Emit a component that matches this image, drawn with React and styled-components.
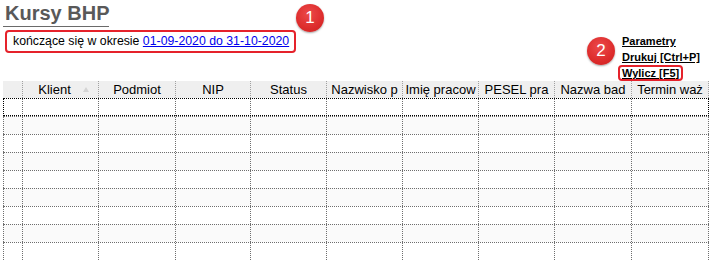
import React from "react";
import styled, { createGlobalStyle } from "styled-components";

const Global = createGlobalStyle`
  html, body { margin: 0; padding: 0; background: #fff; }
  body { font-family: "Liberation Sans", Arial, sans-serif; color: #000; overflow: hidden; }
`;

const Page = styled.div`
  position: relative;
  width: 714px;
  height: 260px;
  overflow: hidden;
`;

const Top = styled.div`
  display: flex;
  justify-content: space-between;
  height: 81px;
  padding-left: 3px;
`;

const Left = styled.div`
  display: flex;
  flex-direction: column;
  align-items: flex-start;
`;

const Title = styled.h1`
  margin: 1px 0 0 0;
  padding: 0 0 1px 2px;
  font-size: 20px;
  line-height: 24px;
  font-weight: bold;
  color: #595959;
  border-bottom: 1px solid #6a6a6a;
`;

const RangeBox = styled.div`
  margin: 3px 0 0 2px;
  padding: 0 5px 0 6px;
  height: 19px;
  line-height: 19px;
  border: 2px solid #e5222b;
  border-radius: 4px;
  font-size: 12.3px;
  white-space: nowrap;
`;

const Link = styled.a`
  color: #0000ee;
  text-decoration: underline;
`;

const Actions = styled.div`
  display: flex;
  flex-direction: column;
  align-items: flex-start;
  padding: 33px 14px 0 0;
  width: 78px;
`;

const Action = styled.a`
  font-size: 11px;
  font-weight: bold;
  color: #000;
  text-decoration: underline;
  line-height: 16px;
  white-space: nowrap;
  ${(p) =>
    p.$marked &&
    `
    margin-left: -4px;
    padding: 0 2px 0 2px;
    line-height: 12px;
    border: 2px solid #e5222b;
    border-radius: 4px;
  `}
`;

const Badge = styled.div`
  position: absolute;
  left: ${(p) => p.$x}px;
  top: ${(p) => p.$y}px;
  width: 28px;
  height: 28px;
  border-radius: 50%;
  background: radial-gradient(circle at 45% 35%, #ec4a4a 0%, #dd2c2c 60%, #c81f1f 100%);
  box-shadow: 0 1px 2px rgba(0, 0, 0, 0.35);
  color: #fff;
  font-size: 17px;
  display: flex;
  align-items: center;
  justify-content: center;
`;

const Grid = styled.div`
  margin-left: 3px;
  width: 706px;
`;

const cols = "20px 76px 77px 75px 76px 76px 76px 76px 77px 77px";

const HeadRow = styled.div`
  display: grid;
  grid-template-columns: ${cols};
  height: 17px;
  background: #efefef;
`;

const HeadCell = styled.div`
  position: relative;
  font-size: 13px;
  line-height: 17px;
  text-align: center;
  white-space: nowrap;
  overflow: hidden;
  border-right: 1px dotted #a0a0a0;
  padding-right: ${(p) => (p.$sort ? "12px" : "0")};
`;

const SortMark = styled.span`
  position: absolute;
  right: 9px;
  top: 6px;
  width: 0;
  height: 0;
  border-left: 3px solid transparent;
  border-right: 3px solid transparent;
  border-bottom: 5px solid #d4d4d4;
`;

const Row = styled.div`
  display: grid;
  grid-template-columns: ${cols};
  height: 18px;
  box-sizing: border-box;
  background: ${(p) => (p.$odd ? "#fafafa" : "#fff")};
  border-top: 1px dotted ${(p) => (p.$focus ? "#000" : "#6e6e6e")};
  ${(p) => p.$focus && "outline: 1px dotted #000; outline-offset: -1px;"}
`;

const Cell = styled.div`
  border-right: 1px dotted #6e6e6e;
  border-left: ${(p) => (p.$first ? "1px dotted #6e6e6e" : "none")};
`;

const headers = ["", "Klient", "Podmiot", "NIP", "Status", "Nazwisko p", "Imię pracow", "PESEL pra", "Nazwa bad", "Termin waż"];

export default function App() {
  return (
    <>
      <Global />
      <Page>
        <Top>
          <Left>
            <Title>Kursy BHP</Title>
            <RangeBox>
              kończące się w okresie <Link href="#">01-09-2020 do 31-10-2020</Link>
            </RangeBox>
          </Left>
          <Actions>
            <Action href="#">Parametry</Action>
            <Action href="#">Drukuj [Ctrl+P]</Action>
            <Action href="#" $marked>Wylicz [F5]</Action>
          </Actions>
        </Top>
        <Grid>
          <HeadRow>
            {headers.map((h, i) => (
              <HeadCell key={i} $sort={i === 1}>
                {h}
                {i === 1 && <SortMark />}
              </HeadCell>
            ))}
          </HeadRow>
          {Array.from({ length: 10 }).map((_, r) => (
            <Row key={r} $odd={r % 2 === 1} $focus={r === 0}>
              {headers.map((_, c) => (
                <Cell key={c} $first={c === 0} />
              ))}
            </Row>
          ))}
        </Grid>
        <Badge $x={296} $y={4}>1</Badge>
        <Badge $x={587} $y={37}>2</Badge>
      </Page>
    </>
  );
}
